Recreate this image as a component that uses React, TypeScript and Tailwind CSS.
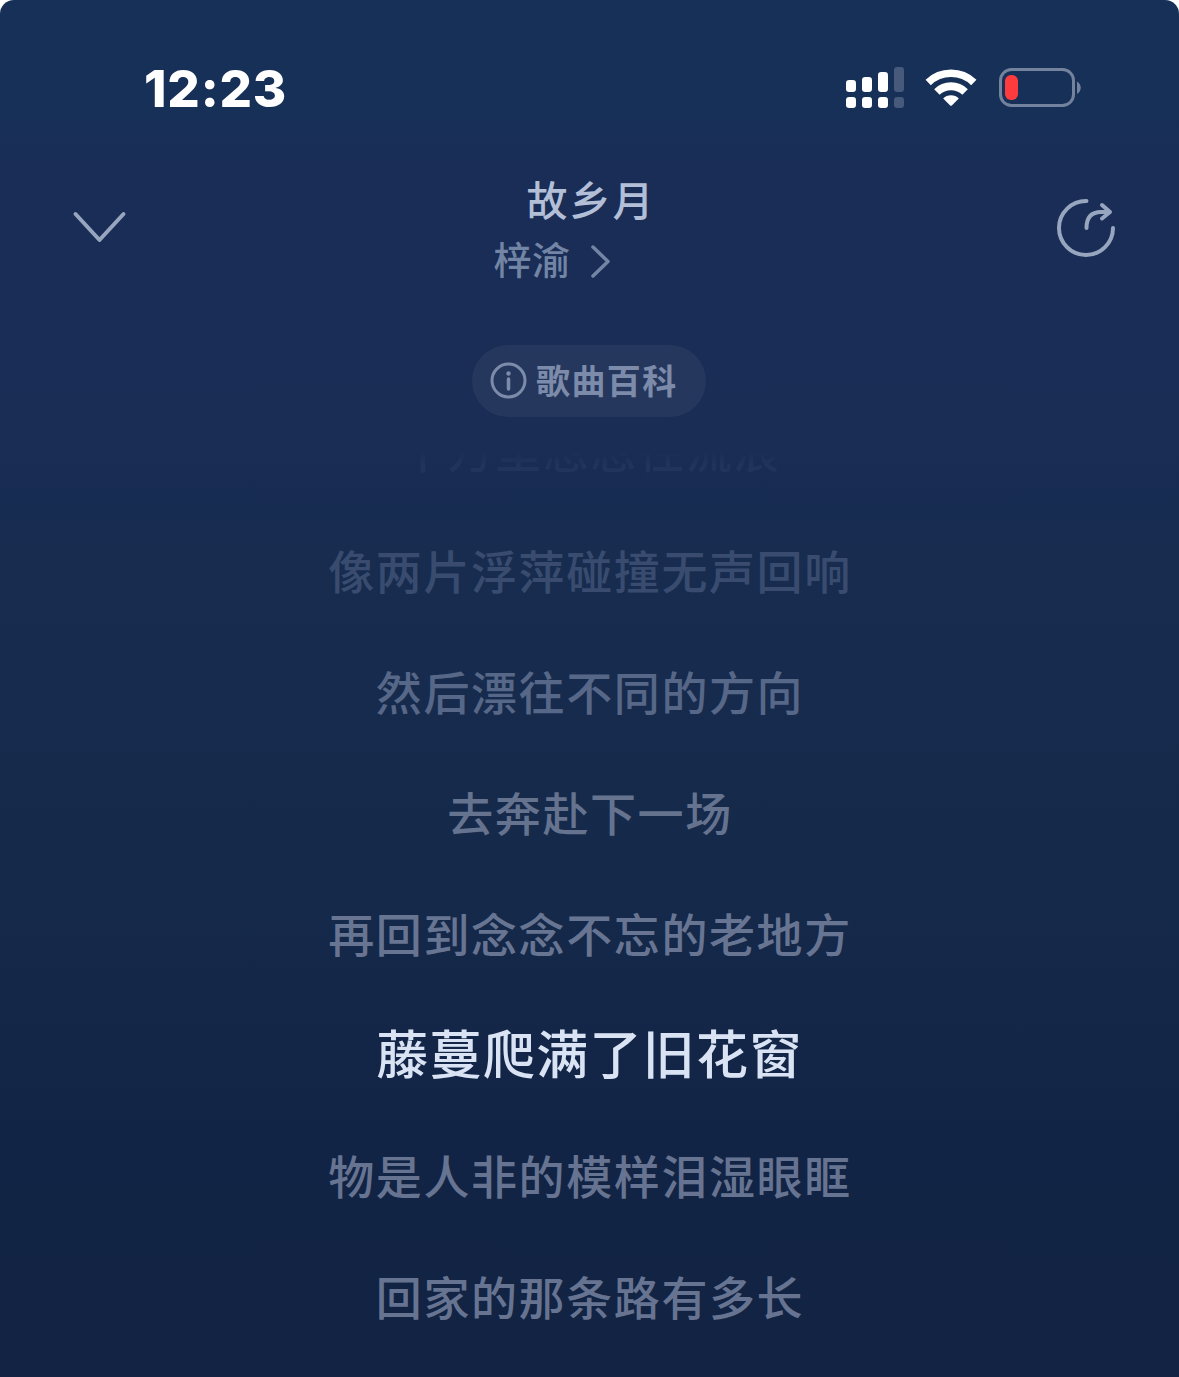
interface LyricLine {
  text: string;
  className: string;
}

const LYRICS: LyricLine[] = [
  { text: "像两片浮萍碰撞无声回响", className: "text-[#394c6f]" },
  { text: "然后漂往不同的方向", className: "text-[#576787]" },
  { text: "去奔赴下一场", className: "text-[#65738f]" },
  { text: "再回到念念不忘的老地方", className: "text-[#687592]" },
  { text: "藤蔓爬满了旧花窗", className: "active" },
  { text: "物是人非的模样泪湿眼眶", className: "text-[#677491]" },
  { text: "回家的那条路有多长", className: "text-[#677491]" },
];

function SignalIcon() {
  return (
    <svg width="58" height="42" viewBox="0 0 58 42" fill="#fff">
      <rect x="0" y="13" width="10" height="12" rx="3.2" />
      <rect x="16" y="10" width="10" height="15" rx="3.2" />
      <rect x="32" y="5" width="10" height="20" rx="3.2" />
      <rect x="48" y="0" width="10" height="25" rx="3.2" fill="#475a7b" />
      <rect x="0" y="30" width="10" height="11" rx="3.2" />
      <rect x="16" y="30" width="10" height="11" rx="3.2" />
      <rect x="32" y="30" width="10" height="11" rx="3.2" />
      <rect x="48" y="30" width="10" height="11" rx="3.2" fill="#475a7b" />
    </svg>
  );
}

function WifiIcon() {
  return (
    <svg width="52" height="42" viewBox="0 0 52 42" fill="none" stroke="#fff">
      <path d="M3.2 15.4A33 33 0 0 1 48.8 15.4" strokeWidth="7.6" />
      <path d="M11.9 25A20.2 20.2 0 0 1 40.1 25" strokeWidth="7.8" />
      <path d="M18.2 31.4A11 11 0 0 1 33.8 31.4L26.8 38.4Q26 39.2 25.2 38.4Z" fill="#fff" stroke="none" />
    </svg>
  );
}

function BatteryIcon() {
  return (
    <svg width="83" height="42" viewBox="0 0 83 42" fill="none">
      <rect x="1.5" y="2.5" width="73" height="36" rx="11" stroke="#74839d" strokeWidth="3" />
      <rect x="6" y="8" width="13" height="25" rx="6" fill="#ff3b3d" />
      <path d="M78 14.5C83 17 83 24.5 78 27Z" fill="#74839d" />
    </svg>
  );
}

function StatusBar() {
  return (
    <div className="flex h-[176px] items-start justify-between pl-[144px] pr-[97px] pt-[62px]">
      <span className="font-['Inter'] text-[51px] font-extrabold leading-[53px] tracking-[0.8px] text-white">12:23</span>
      <div className="flex items-center gap-[22px] pt-[5px]">
        <div className="flex items-center gap-[21px]">
          <SignalIcon />
          <WifiIcon />
        </div>
        <BatteryIcon />
      </div>
    </div>
  );
}

function SongHeader() {
  return (
    <header className="flex h-[169px] items-start justify-between pl-[72px] pr-[63px]">
      <button className="mt-[34px]" aria-label="收起">
        <svg width="56" height="36" viewBox="0 0 56 36" fill="none" stroke="#97a5bf" strokeWidth="4" strokeLinecap="round" strokeLinejoin="round">
          <path d="M3.5 4L27.5 30L51.5 4" />
        </svg>
      </button>
      <div className="-mt-[1px] mr-[35px] flex flex-col">
        <h1 className="pl-[33px] text-[41px] font-medium leading-[46px] tracking-[2px] text-[#b2bfd6]">故乡月</h1>
        <div className="mt-[15px] flex items-center text-[#7385a5]">
          <span className="-mt-[1px] text-[38px] font-medium leading-[46px] tracking-[0.5px]">梓渝</span>
          <svg className="ml-[18px] mt-1" width="24" height="36" viewBox="0 0 24 36" fill="none" stroke="currentColor" strokeWidth="3.5" strokeLinecap="round" strokeLinejoin="round">
            <path d="M4 4L19 18.5L4 33" />
          </svg>
        </div>
      </div>
      <button className="mt-[21px]" aria-label="分享">
        <svg width="60" height="62" viewBox="0 0 60 62" fill="none" stroke="#97a5bf" strokeWidth="4" strokeLinecap="round" strokeLinejoin="round">
          <path d="M30.5 4A27 27 0 1 0 57 31" />
          <path d="M30.5 31C30.5 20 36 15 45 15H53" />
          <path d="M46 8L54 15L46 21.5" />
        </svg>
      </button>
    </header>
  );
}

function WikiPill() {
  return (
    <button className="ml-[472px] flex h-[72px] w-[234px] items-center rounded-full bg-[#25375d] pl-[18px] text-[#7c8ba9]">
      <svg width="38" height="38" viewBox="0 0 38 38" fill="none" stroke="currentColor">
        <circle cx="18.5" cy="18.5" r="16.5" strokeWidth="3" />
        <path d="M18.5 17V27" strokeWidth="3.5" strokeLinecap="round" />
        <circle cx="18.5" cy="11.5" r="2.2" fill="currentColor" stroke="none" />
      </svg>
      <span className="ml-[8px] -mt-[2px] text-[34px] font-bold leading-[40px] tracking-[1.4px]">歌曲百科</span>
    </button>
  );
}

export default function App() {
  return (
    <div className="bg-white">
      <main className="flex h-[1377px] w-[1179px] flex-col overflow-hidden rounded-t-[14px] bg-[linear-gradient(180deg,#173057_0px,#173057_110px,#1a2d57_180px,#192d55_450px,#172c4f_560px,#15294a_900px,#122445_1150px,#122343_1377px)] font-['Noto_Sans_CJK_SC',sans-serif] whitespace-nowrap">
        <StatusBar />
        <SongHeader />
        <WikiPill />

        {/* The line scrolling out fades away below the pill */}
        <p className="mt-[1px] h-[91px] pl-[2px] text-center text-[46px] font-medium leading-[60px] tracking-[1.6px] text-[#20345c] [mask-image:linear-gradient(to_bottom,transparent_32px,black_46px)]">
          千万里忽忽往流浪
        </p>

        <div className="flex flex-col">
          {LYRICS.map((line) => (
            <p
              key={line.text}
              className={`h-[121px] text-center font-medium leading-[121px] ${
                line.className === "active"
                  ? "-mt-[2px] mb-[2px] text-[52px] tracking-[1.3px] text-[#d9e3f4]"
                  : `pl-[1px] text-[46px] tracking-[1.6px] ${line.className}`
              }`}
            >
              {line.text}
            </p>
          ))}
        </div>
      </main>
    </div>
  );
}
